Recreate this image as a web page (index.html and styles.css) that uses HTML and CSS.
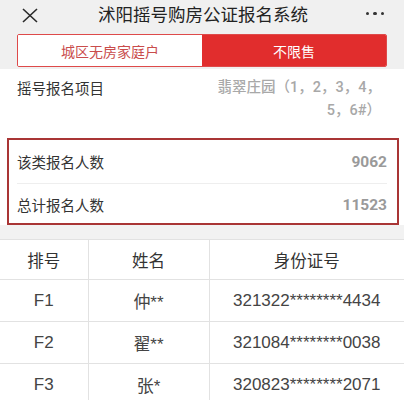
FILE: index.html
```html
<!DOCTYPE html>
<html lang="zh">
<head>
<meta charset="utf-8">
<link rel="stylesheet" href="styles.css">
</head>
<body>
<div class="top">
  <div class="nav">
    <svg class="close" width="16" height="15" viewBox="0 0 16 15"><path d="M1 1 L15 14 M15 1 L1 14" stroke="#2a2a2a" stroke-width="1.6" fill="none"/></svg>
    <div class="title">沭阳摇号购房公证报名系统</div>
    <div class="more"><span></span><span></span><span></span></div>
  </div>
  <div class="tabs">
    <div class="tab tab-off">城区无房家庭户</div>
    <div class="tab tab-on">不限售</div>
  </div>
</div>
<div class="item">
  <div class="label">摇号报名项目</div>
  <div class="item-val">翡翠庄园（1，2，3，4，<br>5，6#）</div>
</div>
<div class="countbox">
  <div class="crow crow-first"><span class="label">该类报名人数</span><span class="num">9062</span></div>
  <div class="crow"><span class="label">总计报名人数</span><span class="num">11523</span></div>
</div>
<div class="gap"></div>
<table class="list">
  <colgroup><col class="c1"><col class="c2"><col class="c3"></colgroup>
  <thead><tr><th>排号</th><th>姓名</th><th>身份证号</th></tr></thead>
  <tbody>
    <tr><td>F1</td><td>仲**</td><td>321322********4434</td></tr>
    <tr><td>F2</td><td>翟**</td><td>321084********0038</td></tr>
    <tr><td>F3</td><td>张*</td><td>320823********2071</td></tr>
  </tbody>
</table>
</body>
</html>
```
FILE: styles.css
```css
html, body {
  margin: 0;
  padding: 0;
  background: #fff;
  font-family: "Noto Sans CJK SC", "Roboto", sans-serif;
  color: #333;
}
.top {
  background: #f0f0f0;
  padding: 0 17px 2px 17px;
}
.nav {
  height: 31px;
  display: grid;
  grid-template-columns: 1fr auto 1fr;
  align-items: center;
  margin: 0 3px 0 5px;
}
.close { display: block; }
.title {
  font-size: 17.5px;
  color: #222;
  line-height: 1;
  padding-bottom: 3px;
}
.more {
  justify-self: end;
  display: flex;
  gap: 4px;
  padding-bottom: 4px;
}
.more span {
  width: 3.5px;
  height: 3.5px;
  border-radius: 50%;
  background: #333;
}
.tabs {
  margin-top: 3px;
  height: 31px;
  display: flex;
  border: 1px solid #de4a4a;
  border-radius: 2px;
  overflow: hidden;
}
.tab {
  flex: 1;
  display: flex;
  align-items: center;
  justify-content: center;
  font-size: 14px;
}
.tab-off { background: #fff; color: #c94c4c; }
.tab-on { background: #e12d2d; color: #fff; }
.item {
  display: flex;
  justify-content: space-between;
  padding: 7px 23px 0 17px;
  height: 69px;
  box-sizing: border-box;
}
.label {
  font-size: 14.5px;
  color: #333;
  line-height: 23px;
}
.item-val {
  text-align: right;
  font-family: "Roboto", "Noto Sans CJK SC", sans-serif;
  font-weight: 500;
  font-size: 14.5px;
  color: #a8a8a8;
  line-height: 23px;
}
.countbox {
  margin: 0 5px 0 7px;
  border: 2px solid #a93535;
  padding: 0 10px 0 8px;
  height: 87px;
  box-sizing: border-box;
}
.crow {
  display: flex;
  justify-content: space-between;
  align-items: center;
  height: 41px;
}
.crow-first {
  height: 43px;
  border-bottom: 1px solid #eeeeee;
}
.num {
  font-family: "Roboto", sans-serif;
  font-weight: bold;
  font-size: 15.5px;
  color: #9a9a9a;
}
.gap {
  height: 14px;
  background: #f2f2f2;
}
.list {
  width: 100%;
  border-collapse: collapse;
  table-layout: fixed;
  font-size: 17px;
  color: #444;
}
.c1 { width: 88px; }
.c2 { width: 121px; }
.list th, .list td {
  border: 1px solid #e2e2e2;
  text-align: center;
  font-weight: normal;
  padding: 0;
}
.list th {
  height: 39px;
  font-size: 16.5px;
  color: #333;
}
.list td {
  height: 41px;
  font-family: "Liberation Sans", "Noto Sans CJK SC", sans-serif;
}
.list tr > :first-child { border-left: none; }
.list tr > :last-child { border-right: none; }
```
